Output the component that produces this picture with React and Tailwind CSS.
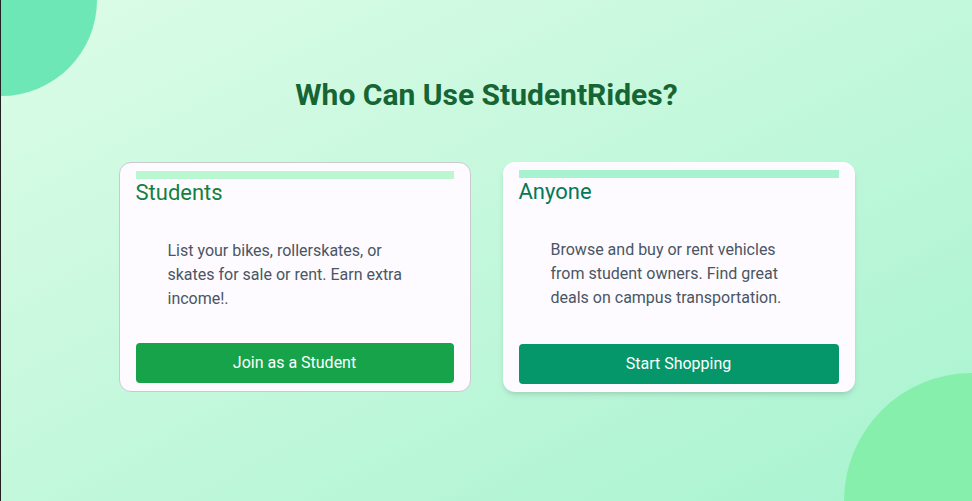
import React from 'react';

const cards = [
  {
    title: 'Students',
    text: 'List your bikes, rollerskates, or skates for sale or rent. Earn extra income!.',
    button: 'Join as a Student',
    frame: 'border border-[#c9c9d1]',
    bar: 'bg-[#bbf7d0]',
    heading: 'text-[#15803d]',
    btn: 'bg-[#16a34a]',
  },
  {
    title: 'Anyone',
    text: 'Browse and buy or rent vehicles from student owners. Find great deals on campus transportation.',
    button: 'Start Shopping',
    frame: 'shadow-md',
    bar: 'bg-[#a7f3d0]',
    heading: 'text-[#047857]',
    btn: 'bg-[#059669]',
  },
];

export default function App() {
  return (
    <div
      className="relative min-h-screen overflow-hidden border-l border-[#222222] bg-gradient-to-br from-[#dcfce7] to-[#a7f3d0]"
      style={{ fontFamily: 'Roboto, "Liberation Sans", sans-serif' }}
    >
      {/* decorative blobs */}
      <div className="absolute -top-24 -left-24 h-48 w-48 rounded-full bg-[#6ee7b7]" />
      <div className="absolute -bottom-32 -right-32 h-64 w-64 rounded-full bg-[#86efac]" />

      <div className="relative flex flex-col items-center pt-[77px]">
        <h2 className="mb-[49px] text-3xl font-bold text-[#166534]">Who Can Use StudentRides?</h2>

        <div className="flex gap-8">
          {cards.map((c) => (
            <div
              key={c.title}
              className={`flex w-88 flex-col rounded-xl bg-[#fdfbff] px-4 pt-2 pb-2 ${c.frame}`}
            >
              <div className={`h-2 w-full ${c.bar}`} />
              <h3 className={`mb-8 text-[22px] leading-7 ${c.heading}`}>{c.title}</h3>
              <p className="mb-8 px-8 text-base leading-6 text-[#4b5563]">{c.text}</p>
              <button
                className={`mt-auto h-10 w-full rounded text-base text-white ${c.btn}`}
              >
                {c.button}
              </button>
            </div>
          ))}
        </div>
      </div>
    </div>
  );
}
